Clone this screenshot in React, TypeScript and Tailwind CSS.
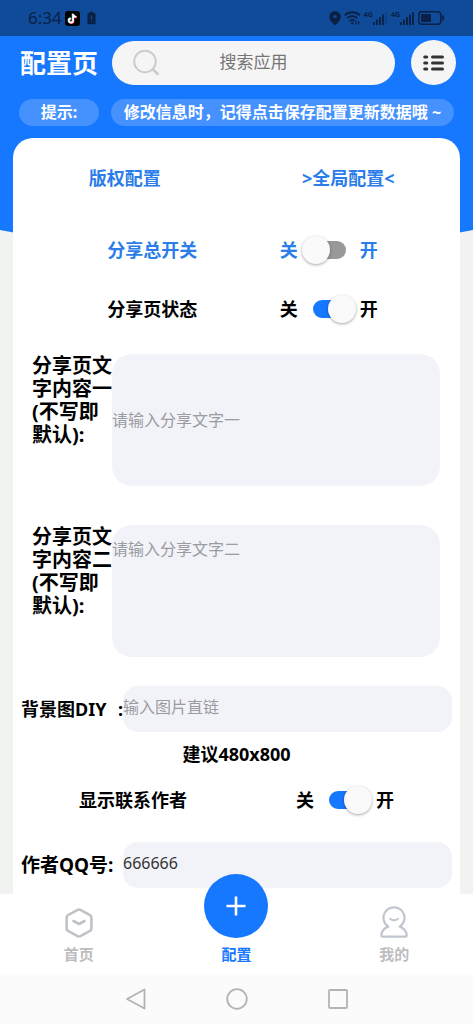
import React, { useState } from 'react';

type SwitchRowProps = {
  id: string;
  label: string;
  checked: boolean;
  onChange: (value: boolean) => void;
  className: string;
};

function SwitchRow({ id, label, checked, onChange, className }: SwitchRowProps) {
  return (
    <div className={`flex items-center h-7 text-lg leading-7 font-bold ${className}`}>
      <label htmlFor={id}>{label}</label>
      <div className="flex items-center gap-1">
        <span>关</span>
        <input
          id={id}
          type="checkbox"
          role="switch"
          checked={checked}
          onChange={(e) => onChange(e.target.checked)}
          className="relative appearance-none w-[54px] h-7 cursor-pointer before:absolute before:left-[11px] before:top-[5px] before:w-[33px] before:h-[18px] before:rounded-full before:bg-[#999999] checked:before:bg-[#1677ff] after:absolute after:left-0 after:top-0 after:size-7 after:rounded-full after:bg-[#fafafa] after:shadow-[0_1px_3px_rgba(0,0,0,0.35)] checked:after:left-[26px]"
        />
        <span>开</span>
      </div>
    </div>
  );
}

function Signal({ bars }: { bars: number }) {
  return (
    <span className="flex items-start">
      <span className="text-[7px] leading-2 font-bold">4G</span>
      <svg width="15" height="14" viewBox="0 0 15 14" fill="currentColor">
        {[0, 1, 2, 3, 4].map((i) => (
          <rect key={i} x={i * 3} y={11 - i * 2.5} width="1.9" height={3 + i * 2.5} rx="0.5" opacity={i < bars ? 1 : 0.25} />
        ))}
      </svg>
    </span>
  );
}

function StatusBar() {
  return (
    <div className="h-9 shrink-0 bg-[#0f4b98] text-[#0a2145] flex items-center justify-between px-7">
      <div className="flex items-center gap-[3px]">
        <span className="text-[17px] leading-6">6:34</span>
        <svg width="15" height="15" viewBox="0 0 15 15">
          <rect width="15" height="15" rx="3" fill="#000" />
          <g fill="none" strokeWidth="1.7">
            <path d="M7.6 2.6v6.6a2.1 2.1 0 1 1-2.1-2.1M7.6 2.6c.2 1.8 1.5 2.9 3.3 3" stroke="#25f4ee" />
            <path d="M8.6 3.4V10a2.1 2.1 0 1 1-2.1-2.1M8.6 3.4c.2 1.8 1.5 2.9 3.3 3" stroke="#fe2c55" />
            <path d="M8.1 3v6.6A2.1 2.1 0 1 1 6 7.5M8.1 3c.2 1.8 1.5 2.9 3.3 3" stroke="#fff" />
          </g>
        </svg>
        <svg className="ml-1" width="9" height="14" viewBox="0 0 10 14">
          <path d="M3 0h4v1.5h1A1.5 1.5 0 0 1 9.5 3v9.5A1.5 1.5 0 0 1 8 14H2a1.5 1.5 0 0 1-1.5-1.5V3A1.5 1.5 0 0 1 2 1.5h1z" fill="currentColor" />
          <path d="M5 4.5v4M5 10v1.5" stroke="#0f4b98" strokeWidth="1.3" />
        </svg>
      </div>
      <div className="flex items-center gap-[3px]">
        <svg width="12" height="15" viewBox="0 0 12 15">
          <path d="M6 0a5.7 5.7 0 0 0-5.7 5.7C.3 9.4 3.6 12 6 14.5c2.4-2.5 5.7-5.1 5.7-8.8A5.7 5.7 0 0 0 6 0z" fill="currentColor" />
          <circle cx="6" cy="5.6" r="1.7" fill="#0f4b98" />
        </svg>
        <svg width="17" height="14" viewBox="0 0 17 14" fill="none" stroke="currentColor" strokeWidth="1.8">
          <path d="M.7 4.3c4.3-4.1 10.7-4.1 15 0M3.2 7.2c2.9-2.8 7.1-2.8 10 0M5.7 10c1.4-1.4 3.6-1.4 5 0" />
          <circle cx="8.2" cy="12.3" r="1.2" fill="currentColor" stroke="none" />
          <path d="M12 10.2v3.3M14.5 10.2v3.3" strokeWidth="1.2" />
        </svg>
        <Signal bars={4} />
        <Signal bars={5} />
        <svg width="27" height="14" viewBox="0 0 27 14">
          <rect x="0.8" y="0.8" width="22" height="12.4" rx="3" fill="none" stroke="currentColor" strokeWidth="1.5" />
          <rect x="3" y="3" width="10" height="8" rx="1" fill="currentColor" />
          <path d="M25 4.5v5" stroke="currentColor" strokeWidth="1.8" />
        </svg>
      </div>
    </div>
  );
}

export default function App() {
  const [shareOn, setShareOn] = useState(false);
  const [pageOn, setPageOn] = useState(true);
  const [contactOn, setContactOn] = useState(true);
  const [textOne, setTextOne] = useState('');
  const [textTwo, setTextTwo] = useState('');
  const [bgUrl, setBgUrl] = useState('');
  const [qq, setQq] = useState('666666');

  return (
    <div className="relative min-h-screen flex flex-col bg-[#f1f3f1] text-black font-['Noto_Sans','Noto_Sans_CJK_SC',sans-serif]">
      {/* curved blue backdrop */}
      <svg className="absolute inset-x-0 top-0 w-full h-64" viewBox="0 0 473 256" preserveAspectRatio="none" fill="#1677ff">
        <path d="M0 0h473v230Q236 277 0 230z" />
      </svg>

      <div className="relative flex-1 flex flex-col">
        <StatusBar />

        <header className="flex items-center pt-1 pl-5 pr-[17px]">
          <h1 className="w-[92px] shrink-0 text-[26px] leading-11 font-bold text-white">配置页</h1>
          <div className="relative flex-1">
            <svg className="absolute left-5 top-2 pointer-events-none" width="30" height="28" viewBox="0 0 30 28" fill="none" stroke="#cccccc" strokeWidth="2">
              <circle cx="13" cy="12.5" r="10.8" />
              <path d="M20.8 20.3l5.7 5.4" strokeWidth="2.6" />
            </svg>
            <input
              type="text"
              aria-label="搜索应用"
              placeholder="搜索应用"
              className="block w-full h-11 pb-0.5 rounded-full bg-[#f5f5f5] text-center text-[17px] text-gray-700 placeholder:text-[#757575] outline-none"
            />
          </div>
          <button type="button" aria-label="菜单" className="ml-4 size-[45px] shrink-0 rounded-full bg-[#f5f5f5] flex items-center justify-center">
            <svg width="21" height="16" viewBox="0 0 21 16" stroke="#333333" strokeWidth="3" strokeLinecap="round">
              <path d="M1.7 2h2M9.5 2h10M1.7 8h2M9.5 8h10M1.7 14h2M9.5 14h10" />
            </svg>
          </button>
        </header>

        <div className="flex gap-3 pt-3.5 px-[19px] text-base leading-[27px] font-bold text-white text-center whitespace-nowrap">
          <span className="w-20 shrink-0 rounded-full bg-[#4592ff]">提示:</span>
          <span className="flex-1 rounded-full bg-[#4592ff]">修改信息时，记得点击保存配置更新数据哦 ~</span>
        </div>

        <main className="flex-1 mt-3 mx-[13px] pb-1.5 bg-white rounded-t-[20px]">
          <div className="flex pt-[26px] text-lg leading-7 font-bold text-[#2b7de9]">
            <button type="button" className="flex-1">版权配置</button>
            <button type="button" className="flex-1">&gt;全局配置&lt;</button>
          </div>

          <SwitchRow id="share" label="分享总开关" checked={shareOn} onChange={setShareOn} className="mt-11 pl-3 justify-evenly text-[#2b7de9]" />
          <SwitchRow id="page" label="分享页状态" checked={pageOn} onChange={setPageOn} className="mt-[31px] pl-3 justify-evenly" />

          <div className="flex items-start mt-[31px] pl-[19px] pr-5">
            <label htmlFor="text-one" className="w-20 shrink-0 text-xl leading-[23px] font-bold">
              分享页文字内容一(不写即默认):
            </label>
            <textarea
              id="text-one"
              value={textOne}
              onChange={(e) => setTextOne(e.target.value)}
              placeholder="请输入分享文字一"
              className="flex-1 min-w-0 h-[132px] pt-14 rounded-[20px] bg-[#f2f3f8] text-base leading-5 placeholder:text-[#9b9b9f] resize-none outline-none"
            />
          </div>

          <div className="flex items-start mt-[39px] pl-[19px] pr-5">
            <label htmlFor="text-two" className="w-20 shrink-0 text-xl leading-[23px] font-bold">
              分享页文字内容二(不写即默认):
            </label>
            <textarea
              id="text-two"
              value={textTwo}
              onChange={(e) => setTextTwo(e.target.value)}
              placeholder="请输入分享文字二"
              className="flex-1 min-w-0 h-[132px] pt-3.5 rounded-[20px] bg-[#f2f3f8] text-base leading-5 placeholder:text-[#9b9b9f] resize-none outline-none"
            />
          </div>

          <div className="flex items-center mt-[29px] px-2">
            <label htmlFor="bg-url" className="w-[102px] shrink-0 flex justify-between text-lg font-bold">
              <span>背景图DIY</span>
              <span>:</span>
            </label>
            <input
              id="bg-url"
              type="text"
              value={bgUrl}
              onChange={(e) => setBgUrl(e.target.value)}
              placeholder="输入图片直链"
              className="flex-1 min-w-0 h-[46px] pb-1 rounded-[15px] bg-[#f2f3f8] text-base placeholder:text-[#9b9b9f] outline-none"
            />
          </div>

          <p className="mt-2 text-center text-lg leading-7 font-bold">建议480x800</p>

          <SwitchRow id="contact" label="显示联系作者" checked={contactOn} onChange={setContactOn} className="mt-[18px] px-[66px] justify-between" />

          <div className="flex items-center mt-7 px-2">
            <label htmlFor="qq" className="w-[102px] shrink-0 text-[19px] leading-7 font-bold">作者QQ号:</label>
            <input
              id="qq"
              type="text"
              value={qq}
              onChange={(e) => setQq(e.target.value)}
              className="flex-1 min-w-0 h-[46px] pb-1 rounded-[15px] bg-[#f2f3f8] text-base text-[#333333] outline-none"
            />
          </div>
        </main>
      </div>

      <footer className="sticky bottom-0 bg-white">
        <nav className="grid grid-cols-3 items-end h-20 pb-2 text-[15px] leading-6 font-bold text-[#bdbdbf]">
          <a href="#home" className="flex flex-col items-center gap-1">
            <svg width="28" height="30" viewBox="0 0 28 30" fill="none" stroke="#bfc2c6" strokeWidth="2.6" strokeLinejoin="round" strokeLinecap="round">
              <path d="M12.6 1.9 3 7.2Q1.6 8 1.6 9.6v10.8q0 1.6 1.4 2.4l9.6 5.3q1.4.7 2.8 0l9.6-5.3q1.4-.8 1.4-2.4V9.6q0-1.6-1.4-2.4L15.4 1.9q-1.4-.7-2.8 0z" />
              <path d="M8.5 13l5.5 3 5.5-3" />
            </svg>
            首页
          </a>
          <a href="#config" className="flex flex-col items-center gap-1 text-[#1677ff]">
            <span className="size-16 -mt-5 rounded-full bg-[#1677ff] flex items-center justify-center">
              <svg width="20" height="20" viewBox="0 0 20 20" stroke="#fff" strokeWidth="2.6">
                <path d="M10 .5v19M.5 10h19" />
              </svg>
            </span>
            配置
          </a>
          <a href="#mine" className="flex flex-col items-center gap-1">
            <svg width="28" height="32" viewBox="0 0 28 32" fill="none" stroke="#c0c5ce" strokeWidth="2.2" strokeLinejoin="round" strokeLinecap="round">
              <path d="M8.3 20.6a10.5 10.5 0 1 1 11.4 0c4 1.5 6.6 4.6 7 8.4q.1 1.7-1.5 1.7H2.8q-1.6 0-1.5-1.7c.4-3.8 3-6.9 7-8.4z" />
              <path d="M10 12.6c2 2.2 6 2.2 8 0" strokeWidth="1.8" />
            </svg>
            我的
          </a>
        </nav>

        <div className="h-[50px] bg-[#fbfbfb] flex items-center justify-center gap-[79px] text-[#b3b3b3]">
          <button type="button" aria-label="返回">
            <svg width="22" height="22" viewBox="0 0 22 22" fill="none" stroke="currentColor" strokeWidth="1.8" strokeLinejoin="round">
              <path d="M19.5 1.5v19L2 11z" />
            </svg>
          </button>
          <button type="button" aria-label="主屏幕">
            <svg width="22" height="22" viewBox="0 0 22 22" fill="none" stroke="currentColor" strokeWidth="1.8">
              <circle cx="11" cy="11" r="9.8" />
            </svg>
          </button>
          <button type="button" aria-label="最近任务">
            <svg width="22" height="22" viewBox="0 0 22 22" fill="none" stroke="currentColor" strokeWidth="1.8">
              <rect x="2" y="2" width="18" height="18" rx="1" />
            </svg>
          </button>
        </div>
      </footer>
    </div>
  );
}
